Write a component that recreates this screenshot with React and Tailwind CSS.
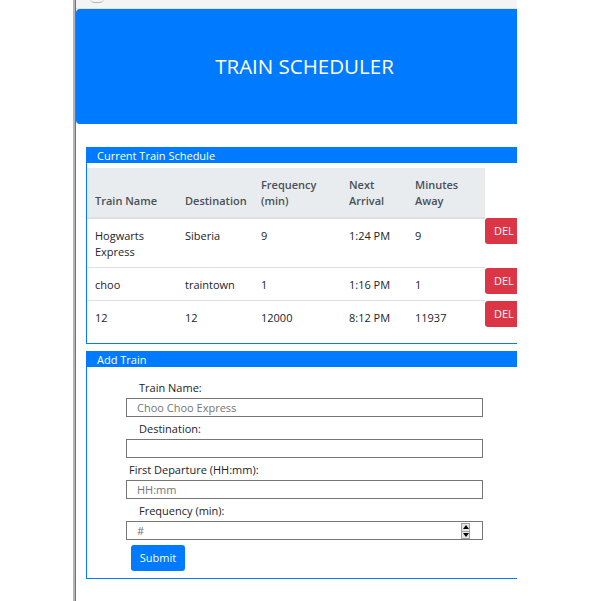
import React from 'react';

const trains = [
  { name: ['Hogwarts', 'Express'], dest: 'Siberia', freq: '9', next: '1:24 PM', away: '9' },
  { name: ['choo'], dest: 'traintown', freq: '1', next: '1:16 PM', away: '1' },
  { name: ['12'], dest: '12', freq: '12000', next: '8:12 PM', away: '11937' },
];

function Spinner() {
  return (
    <div className="absolute right-[12px] top-[1px] flex h-[16px] w-[9px] flex-col border border-[#a0a0a0] bg-[#e6e6e6]">
      <div className="flex flex-1 items-center justify-center border-b border-[#a0a0a0]">
        <svg width="6" height="4" viewBox="0 0 6 4"><path d="M0 4 L3 0 L6 4 Z" fill="#000" /></svg>
      </div>
      <div className="flex flex-1 items-center justify-center">
        <svg width="6" height="4" viewBox="0 0 6 4"><path d="M0 0 L6 0 L3 4 Z" fill="#000" /></svg>
      </div>
    </div>
  );
}

function Field({ label, labelPad, placeholder, spinner, top }) {
  return (
    <div className={top}>
      <div className={`h-[16px] text-[11px] leading-[16px] text-[#212529] ${labelPad}`}>{label}</div>
      <div className="relative mt-[2px] ml-[39px] h-[19px] w-[357px] border border-[#767676] bg-white pl-[10px] text-[11px] leading-[17px] text-[#757575]">
        {placeholder}
        {spinner && <Spinner />}
      </div>
    </div>
  );
}

const th = 'border-b-2 border-[#dee2e6] bg-[#e9ecef] pt-[9px] pb-[8px] pl-[8px] font-semibold';
const tdBase = 'pl-[8px] pt-[9px]';

export default function App() {
  return (
    <div className="flex h-[601px] w-[600px] overflow-hidden bg-white font-['Open_Sans',sans-serif]">
      <div className="w-[73px]" />
      <div className="w-[2px] bg-[#b4b4b4]" />
      <div className="w-[1px] bg-[#1a84ff]" />
      <div className="w-[441px] overflow-hidden">
        <div className="w-[457px]">
          <div className="relative h-[9px] border-b border-[#e2e2e2] bg-[#f4f4f4]">
            <div className="absolute left-[14px] top-[-6px] h-[9px] w-[14px] rounded-full border-b border-[#b8b8b8]" />
          </div>
          <div className="flex h-[115px] items-center justify-center rounded-[4px] bg-[#007bff] text-[20.5px] font-normal text-white">
            TRAIN SCHEDULER
          </div>

          <div className="pl-[10px] pt-[23px]">
            <div className="w-[440px] border border-[#007bff] pb-[10px]">
              <div className="h-[15px] bg-[#007bff] pl-[10px] text-[11px] leading-[15px] text-white">Current Train Schedule</div>
              <table className="mt-[5px] border-collapse text-[11px] leading-[16px] text-[#212529]">
                <thead>
                  <tr className="text-left align-bottom text-[#495057]">
                    <th className={`w-[90px] ${th}`}>Train Name</th>
                    <th className={`w-[76px] ${th}`}>Destination</th>
                    <th className={`w-[88px] ${th}`}>Frequency<br />(min)</th>
                    <th className={`w-[66px] ${th}`}>Next<br />Arrival</th>
                    <th className={`w-[78px] ${th}`}>Minutes<br />Away</th>
                    <th className="w-[40px]" />
                  </tr>
                </thead>
                <tbody>
                  {trains.map((t, i) => (
                    <tr key={i} className="align-top">
                      <td className={`${tdBase} pb-[7px] ${i > 0 ? 'border-t border-[#dee2e6]' : ''}`}>
                        {t.name.map((n) => <div key={n}>{n}</div>)}
                      </td>
                      <td className={`${tdBase} ${i > 0 ? 'border-t border-[#dee2e6]' : ''}`}>{t.dest}</td>
                      <td className={`${tdBase} ${i > 0 ? 'border-t border-[#dee2e6]' : ''}`}>{t.freq}</td>
                      <td className={`${tdBase} ${i > 0 ? 'border-t border-[#dee2e6]' : ''}`}>{t.next}</td>
                      <td className={`${tdBase} ${i > 0 ? 'border-t border-[#dee2e6]' : ''}`}>{t.away}</td>
                      <td className="p-0">
                        <button className="block h-[26px] w-[40px] rounded-[3px] bg-[#dc3545] pl-[9px] text-left text-[11px] text-white">DEL</button>
                      </td>
                    </tr>
                  ))}
                </tbody>
              </table>
            </div>

            <div className="mt-[7px] w-[440px] border border-[#007bff] pb-[7px]">
              <div className="h-[15px] bg-[#007bff] pl-[10px] text-[11px] leading-[15px] text-white">Add Train</div>
              <Field top="mt-[13px]" label="Train Name:" labelPad="pl-[52px]" placeholder="Choo Choo Express" />
              <Field top="mt-[4px]" label="Destination:" labelPad="pl-[52px]" placeholder="" />
              <Field top="mt-[4px]" label="First Departure (HH:mm):" labelPad="pl-[42px]" placeholder="HH:mm" />
              <Field top="mt-[4px]" label="Frequency (min):" labelPad="pl-[52px]" placeholder="#" spinner />
              <button className="mt-[5px] ml-[44px] h-[26px] w-[54px] rounded-[3px] bg-[#007bff] text-[11px] text-white">Submit</button>
            </div>
          </div>
        </div>
      </div>
    </div>
  );
}
